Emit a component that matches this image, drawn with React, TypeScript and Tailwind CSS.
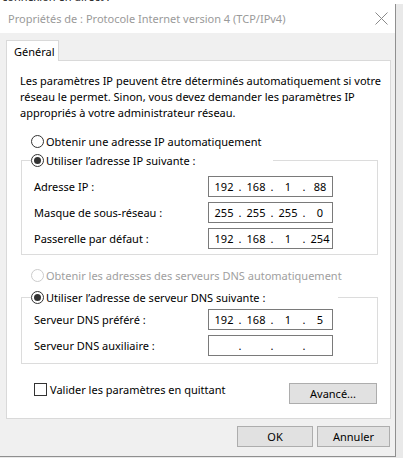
import React from 'react';

const Radio: React.FC<{ checked?: boolean; disabled?: boolean }> = ({ checked, disabled }) => (
  <span
    className={
      'flex h-[13px] w-[13px] shrink-0 items-center justify-center rounded-full border bg-white ' +
      (disabled ? 'border-[#cccccc]' : 'border-[#333333]')
    }
  >
    {checked && <span className="h-[7px] w-[7px] rounded-full bg-[#333333]" />}
  </span>
);

const IpBox: React.FC<{ parts: string[] }> = ({ parts }) => (
  <div className="flex h-[21px] w-[125px] items-center border border-[#7a7a7a] bg-white pl-[3px] text-[#000]">
    {parts.map((p, i) => (
      <React.Fragment key={i}>
        <span className="w-[24px] text-center">{p}</span>
        {i < 3 && <span className="w-[8px] text-center">.</span>}
      </React.Fragment>
    ))}
  </div>
);

const Row: React.FC<{ label: string; parts: string[] }> = ({ label, parts }) => (
  <div className="flex h-[21px] items-center pl-[12px] pr-[44px]">
    <span className="flex-1">{label}</span>
    <IpBox parts={parts} />
  </div>
);

const Button: React.FC<{ label: string; className: string }> = ({ label, className }) => (
  <div className={'flex h-[21px] items-center justify-center border border-[#adadad] bg-[#e1e1e1] ' + className}>
    {label}
  </div>
);

const App: React.FC = () => {
  return (
    <div className="h-[458px] w-[403px] overflow-hidden bg-[#e9e9e9] font-['Noto_Sans',sans-serif] text-[11px] leading-[15px] text-[#000]">
      <div className="h-[4px] overflow-hidden bg-white">
        <div className="-mt-[11px] pl-[2px] text-[#222]">connexion en direct :</div>
      </div>
      <div className="flex h-[453px] w-[396px] flex-col border-r border-b border-[#8f8f8f] bg-[#f0f0f0]">
        <div className="flex h-[29px] shrink-0 items-center justify-between bg-white pl-[8px] pr-[7px] text-[#9a9a9a]">
          <span>Propriétés de : Protocole Internet version 4 (TCP/IPv4)</span>
          <svg width="13" height="13" viewBox="0 0 13 13" fill="none" stroke="#8a8a8a" strokeWidth="1">
            <path d="M0.5 0.5L12.5 12.5M12.5 0.5L0.5 12.5" />
          </svg>
        </div>

        <div className="px-[6px] pt-[7px]">
          <div className="relative z-10 -mb-px flex h-[21px] w-[53px] items-center border border-b-0 border-[#d9d9d9] bg-white pl-[7px]">
            Général
          </div>
          <div className="flex h-[359px] w-[385px] flex-col border border-[#d9d9d9] bg-white">
            <p className="mt-[12px] pl-[13px] leading-[16px]">
              Les paramètres IP peuvent être déterminés automatiquement si votre
              <br />
              réseau le permet. Sinon, vous devez demander les paramètres IP
              <br />
              appropriés à votre administrateur réseau.
            </p>

            <div className="mt-[12px] flex h-[16px] items-center gap-[2px] pl-[24px]">
              <Radio />
              <span>Obtenir une adresse IP automatiquement</span>
            </div>

            <fieldset className="mt-[3px] ml-[14px] w-[357px] border border-[#dcdcdc] pb-[5px]">
              <legend className="ml-[9px] flex h-[16px] items-center gap-[2px]">
                <Radio checked />
                <span>Utiliser l’adresse IP suivante :</span>
                <span className="w-[76px] shrink-0" />
              </legend>
              <div className="mt-[8px] flex flex-col gap-[5px]">
                <Row label="Adresse IP :" parts={['192', '168', '1', '88']} />
                <Row label="Masque de sous-réseau :" parts={['255', '255', '255', '0']} />
                <Row label="Passerelle par défaut :" parts={['192', '168', '1', '254']} />
              </div>
            </fieldset>

            <div className="mt-[12px] flex h-[16px] items-center gap-[2px] pl-[24px] text-[#a0a0a0]">
              <Radio disabled />
              <span>Obtenir les adresses des serveurs DNS automatiquement</span>
            </div>

            <fieldset className="mt-[6px] ml-[14px] w-[357px] border border-[#dcdcdc] pb-[7px]">
              <legend className="ml-[9px] flex h-[16px] items-center gap-[2px]">
                <Radio checked />
                <span>Utiliser l’adresse de serveur DNS suivante :</span>
                <span className="w-[71px] shrink-0" />
              </legend>
              <div className="mt-[4px] flex flex-col gap-[5px]">
                <Row label="Serveur DNS préféré :" parts={['192', '168', '1', '5']} />
                <Row label="Serveur DNS auxiliaire :" parts={['', '', '', '']} />
              </div>
            </fieldset>

            <div className="mt-[19px] flex items-start pl-[27px] pr-[13px]">
              <div className="-mt-[1px] flex flex-1 items-center gap-[3px]">
                <span className="h-[13px] w-[13px] border border-[#333333] bg-white" />
                <span>Valider les paramètres en quittant</span>
              </div>
              <Button label="Avancé..." className="w-[88px]" />
            </div>
          </div>
        </div>

        <div className="flex justify-end gap-[4px] pt-[7px] pr-[5px]">
          <Button label="OK" className="w-[76px]" />
          <Button label="Annuler" className="w-[73px]" />
        </div>
      </div>
    </div>
  );
};

export default App;
